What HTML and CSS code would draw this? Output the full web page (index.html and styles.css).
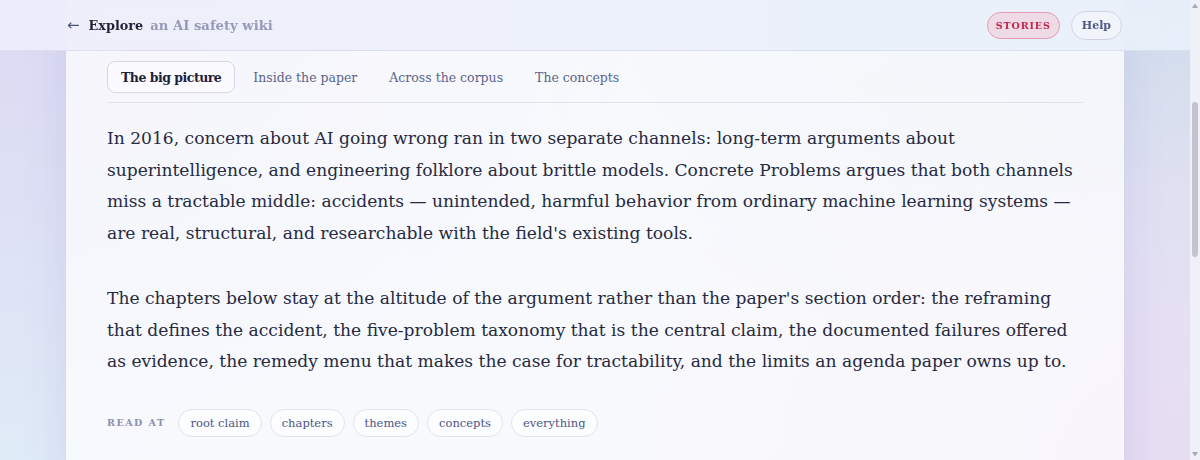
FILE: index.html
```html
<!DOCTYPE html>
<html lang="en">
<head>
<meta charset="utf-8">
<title>Explore — an AI safety wiki</title>
<link rel="stylesheet" href="styles.css">
</head>
<body>
  <header class="topbar">
    <div class="topbar-inner">
      <a class="brand" href="#">
        <span class="brand-back">&larr;</span>
        <span class="brand-name">Explore</span>
        <span class="brand-tag">an AI safety wiki</span>
      </a>
      <nav class="topbar-actions">
        <a class="pill-stories" href="#">Stories</a>
        <a class="pill-help" href="#">Help</a>
      </nav>
    </div>
  </header>

  <main class="sheet">
    <nav class="tabs">
      <a class="tab tab-active" href="#">The big picture</a>
      <a class="tab" href="#">Inside the paper</a>
      <a class="tab" href="#">Across the corpus</a>
      <a class="tab" href="#">The concepts</a>
    </nav>

    <section class="summary">
      <p>In 2016, concern about AI going wrong ran in two separate channels: long-term arguments about superintelligence, and engineering folklore about brittle models. Concrete Problems argues that both channels miss a tractable middle: accidents — unintended, harmful behavior from ordinary machine learning systems — are real, structural, and researchable with the field's existing tools.</p>
      <p>The chapters below stay at the altitude of the argument rather than the paper's section order: the reframing that defines the accident, the five-problem taxonomy that is the central claim, the documented failures offered as evidence, the remedy menu that makes the case for tractability, and the limits an agenda paper owns up to.</p>
    </section>

    <div class="read-at">
      <span class="read-at-label">Read at</span>
      <a class="depth" href="#">root claim</a>
      <a class="depth" href="#">chapters</a>
      <a class="depth" href="#">themes</a>
      <a class="depth" href="#">concepts</a>
      <a class="depth" href="#">everything</a>
    </div>
  </main>

  <aside class="rail" aria-hidden="true">
    <svg class="rail-arrow" width="10" height="14" viewBox="0 0 10 14"><path d="M5 3.5 8 8H2z" fill="#a7a9b7"/></svg>
    <div class="rail-track">
      <div class="rail-thumb" style="margin-top: 88px; height: 155px;"></div>
    </div>
    <svg class="rail-arrow" width="10" height="14" viewBox="0 0 10 14"><path d="M2 6h6l-3 4.5z" fill="#a7a9b7"/></svg>
  </aside>
</body>
</html>
```

FILE: styles.css
```css
* {
  box-sizing: border-box;
}

body {
  margin: 0;
  padding-right: 10px;
  min-height: 1280px;
  font-family: "DejaVu Serif", "Liberation Serif", serif;
  color: #262a40;
  background-color: #e4ebf7;
  background-image:
    radial-gradient(ellipse 700px 520px at 0% 0%, #dbdaf3 0%, rgba(219, 218, 243, 0) 100%),
    radial-gradient(ellipse 700px 520px at 100% 100%, #e7dcf3 0%, rgba(231, 220, 243, 0) 100%),
    radial-gradient(ellipse 700px 400px at 100% 0%, #cbdcea 0%, rgba(203, 220, 234, 0) 100%),
    radial-gradient(ellipse 700px 400px at 0% 100%, #e0edf8 0%, rgba(224, 237, 248, 0) 100%);
  background-attachment: fixed;
}

a {
  text-decoration: none;
  color: inherit;
}

/* Fixed top bar, frosted over the sheet */
.topbar {
  position: fixed;
  top: 0;
  left: 0;
  right: 10px;
  height: 51px;
  z-index: 10;
  background: linear-gradient(to right, rgba(238, 238, 251, 0.9), rgba(232, 240, 250, 0.9));
  border-bottom: 1px solid #dcdfee;
  backdrop-filter: blur(10px);
}

.topbar-inner {
  max-width: 1058px;
  height: 50px;
  margin: 0 auto;
  padding: 0 2px 0 1px;
  display: flex;
  align-items: center;
  justify-content: space-between;
}

.brand {
  display: flex;
  align-items: baseline;
}

.brand-back {
  font-size: 15px;
  color: #4c5478;
  font-family: "DejaVu Sans", sans-serif;
  margin-right: 9px;
}

.brand-name {
  font-weight: 700;
  font-size: 12.8px;
  color: #1e2236;
  margin-right: 7px;
}

.brand-tag {
  font-size: 13.2px;
  color: #959ab8;
  font-weight: 700;
}

.topbar-actions {
  display: flex;
  align-items: center;
  gap: 11px;
}

.pill-stories {
  height: 27px;
  padding: 0 8px;
  display: flex;
  align-items: center;
  border-radius: 14px;
  border: 1px solid #e29bb0;
  background: #efdbe6;
  color: #c4234d;
  font-size: 9.5px;
  font-weight: 700;
  letter-spacing: 0.9px;
  text-transform: uppercase;
}

.pill-help {
  height: 29px;
  padding: 0 10px;
  display: flex;
  align-items: center;
  border-radius: 15px;
  border: 1px solid #cfd2e2;
  background: #f2f4fb;
  color: #4e5883;
  font-size: 11px;
  font-weight: 700;
}

/* Reading sheet */
.sheet {
  max-width: 1058px;
  margin: 0 auto;
  padding: 61px 41px 60px;
  background: rgba(255, 255, 255, 0.72);
  box-shadow: 0 0 40px rgba(110, 110, 190, 0.16);
  min-height: 1280px;
}

.tabs {
  display: flex;
  gap: 4px;
  padding-bottom: 9px;
  border-bottom: 1px solid #e0e2ee;
}

.tab {
  height: 32px;
  padding: 0 13px;
  display: flex;
  align-items: center;
  border: 1px solid transparent;
  border-radius: 8px;
  font-size: 12.5px;
  color: #5b6489;
}

.tab-active {
  border-color: #d6d8e8;
  background: #fbfbff;
  color: #1e2238;
  font-weight: 600;
  letter-spacing: -0.5px;
}

.summary {
  padding-top: 20px;
}

.summary p {
  margin: 0 0 33px;
  font-size: 17.1px;
  line-height: 31.7px;
}

.read-at {
  display: flex;
  align-items: center;
  gap: 8px;
  margin-top: -2px;
}

.read-at-label {
  font-size: 9.5px;
  font-weight: 700;
  letter-spacing: 1.5px;
  text-transform: uppercase;
  color: #8a90ae;
  margin-right: 5px;
}

.depth {
  height: 28px;
  padding: 0 11px;
  display: flex;
  align-items: center;
  border: 1px solid #e2e4ef;
  border-radius: 14px;
  background: rgba(255, 255, 255, 0.6);
  font-size: 11.5px;
  color: #4d5680;
}

/* Right-edge scroll rail */
.rail {
  position: fixed;
  top: 0;
  right: 0;
  bottom: 0;
  width: 10px;
  z-index: 20;
  display: flex;
  flex-direction: column;
  background: #eff0f8;
}

.rail-arrow {
  display: block;
  flex: none;
}

.rail-track {
  flex: 1;
  display: flex;
  flex-direction: column;
  align-items: center;
}

.rail-thumb {
  width: 6px;
  border-radius: 3px;
  background: #c3c4cf;
}
```
